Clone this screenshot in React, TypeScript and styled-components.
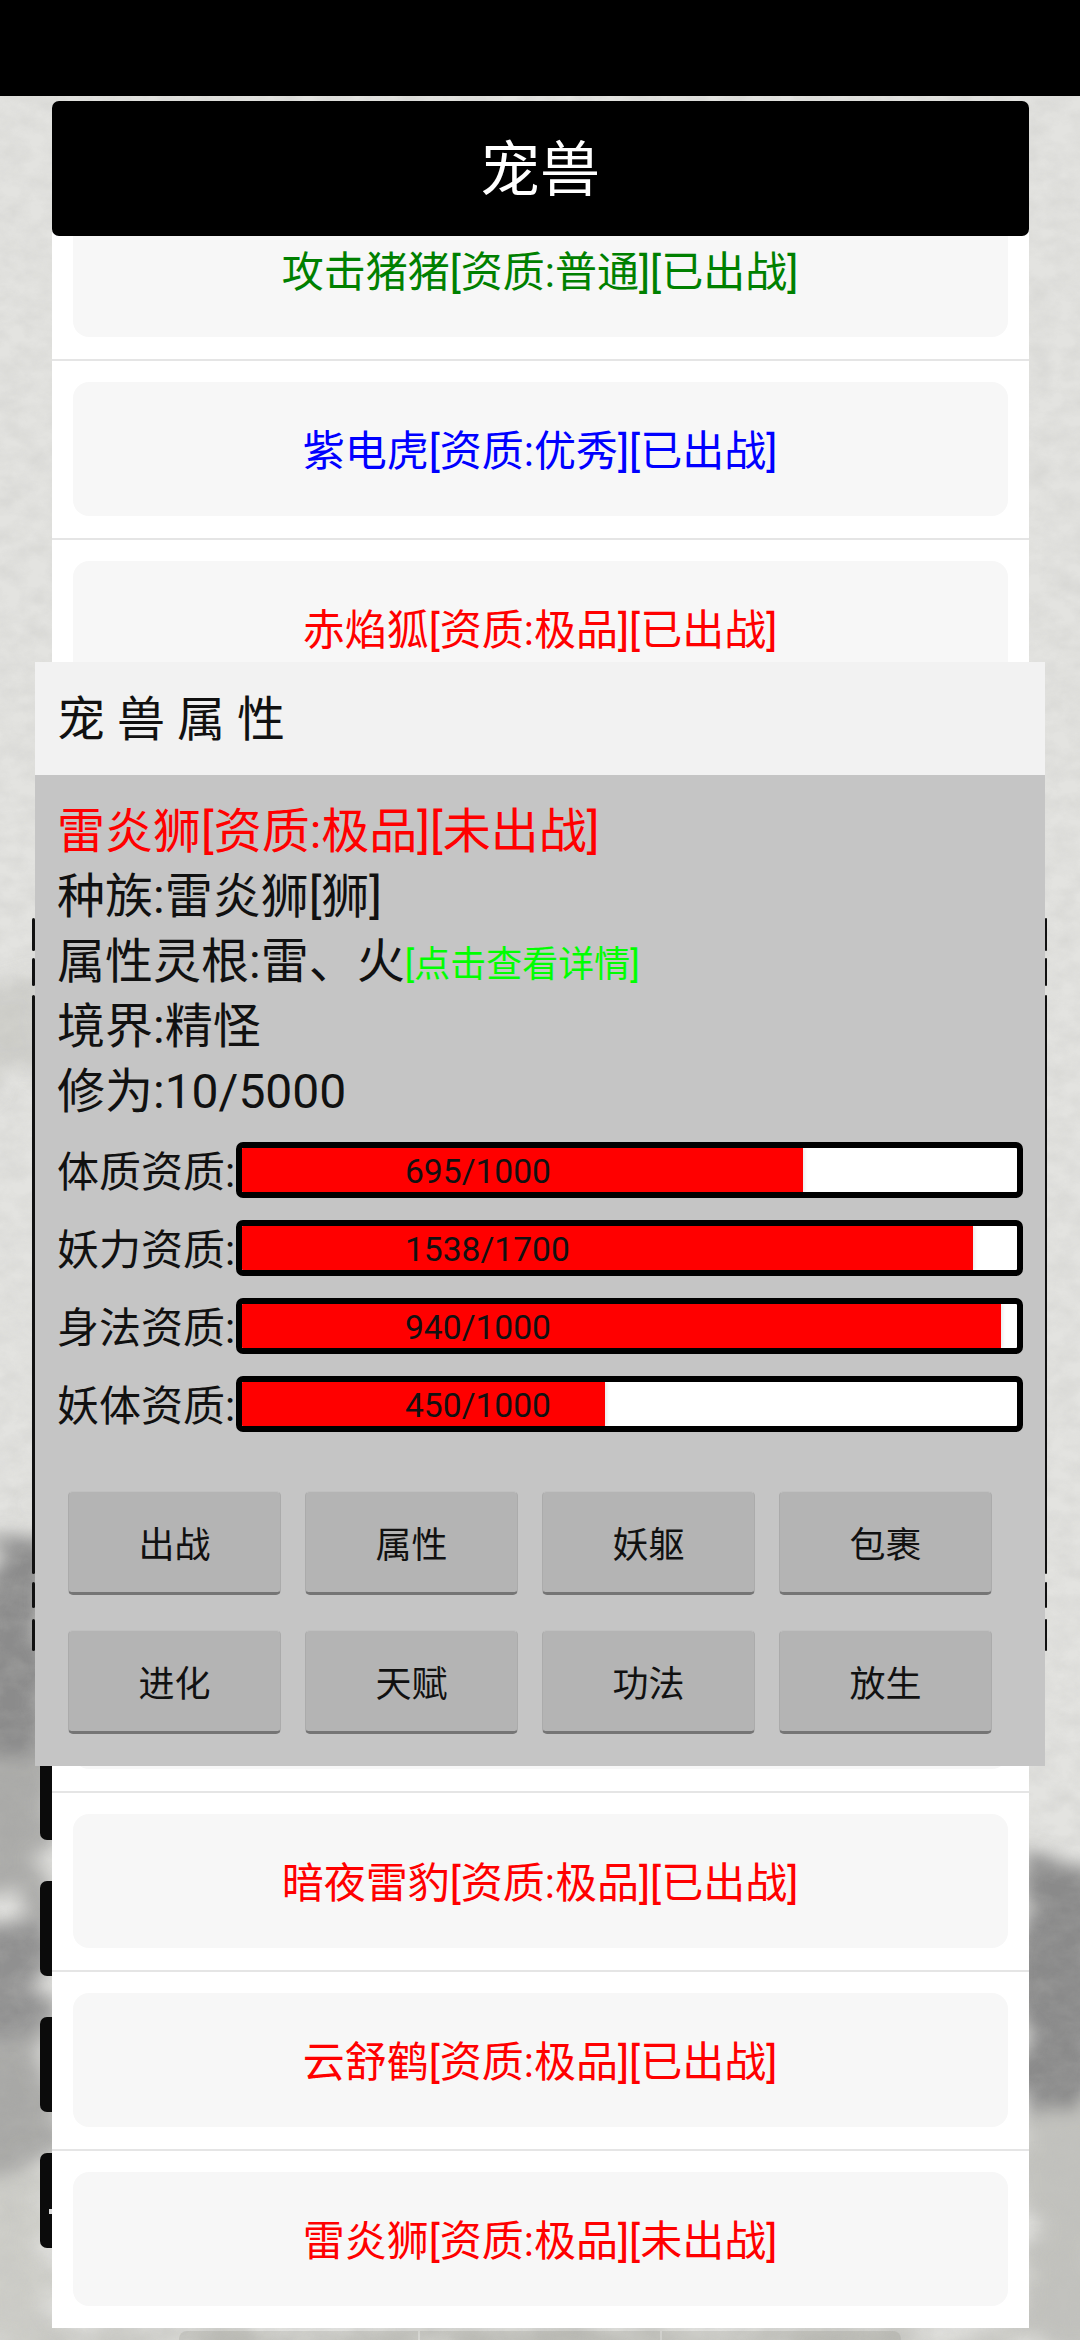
import React from 'react'
import styled, { createGlobalStyle } from 'styled-components'

const pets = [
  { name: '攻击猪猪[资质:普通][已出战]', color: '#008000' },
  { name: '紫电虎[资质:优秀][已出战]', color: '#0000ff' },
  { name: '赤焰狐[资质:极品][已出战]', color: '#ff0000' },
  { name: '', color: '#ff0000' },
  { name: '', color: '#ff0000' },
  { name: '', color: '#ff0000' },
  { name: '', color: '#ff0000' },
  { name: '', color: '#ff0000' },
  { name: '', color: '#ff0000' },
  { name: '暗夜雷豹[资质:极品][已出战]', color: '#ff0000' },
  { name: '云舒鹤[资质:极品][已出战]', color: '#ff0000' },
  { name: '雷炎狮[资质:极品][未出战]', color: '#ff0000' },
]

const stats = [
  { label: '体质资质:', value: 695, max: 1000 },
  { label: '妖力资质:', value: 1538, max: 1700 },
  { label: '身法资质:', value: 940, max: 1000 },
  { label: '妖体资质:', value: 450, max: 1000 },
]

const actions = ['出战', '属性', '妖躯', '包裹', '进化', '天赋', '功法', '放生']

// bits of the page underneath that stick out on both sides of the dialog
const edgeTicks = [
  { top: 822, height: 33 },
  { top: 862, height: 28 },
  { top: 899, height: 579 },
  { top: 1486, height: 26 },
  { top: 1523, height: 32 },
]

const Paper = () => (
  <PaperSvg viewBox="0 0 1080 2244" preserveAspectRatio="none">
    <defs>
      <filter id="mottle" x="0" y="0" width="100%" height="100%">
        <feTurbulence type="fractalNoise" baseFrequency="0.04 0.06" numOctaves="5" seed="7" />
        <feColorMatrix values="0 0 0 0 0.5  0 0 0 0 0.5  0 0 0 0 0.48  0.3 0.3 0 0 -0.22" />
      </filter>
      <filter id="ink" x="-30%" y="-30%" width="160%" height="160%">
        <feTurbulence type="fractalNoise" baseFrequency="0.015 0.035" numOctaves="5" seed="11" result="n" />
        <feDisplacementMap in="SourceGraphic" in2="n" scale="80" />
        <feGaussianBlur stdDeviation="9" />
      </filter>
    </defs>
    <rect width="1080" height="2244" fill="#e3e3e0" />
    <g filter="url(#ink)">
      <path d="M-30 905 L42 880 L42 960 L-30 1010 Z" fill="#cacac6" opacity="0.8" />
      <path d="M-30 1500 L45 1420 L50 1680 L-30 1700 Z" fill="#8b8b8b" />
      <path d="M-30 1690 L50 1640 L50 1810 L-30 1790 Z" fill="#aaaaa8" />
      <path d="M-30 1840 L55 1800 L55 1915 L-30 1960 Z" fill="#909090" />
      <path d="M-30 1960 L55 1925 L55 2060 L-30 2080 Z" fill="#a8a8a6" />
      <path d="M-30 2085 L55 2070 L55 2260 L-30 2260 Z" fill="#cdcdc8" />
      <path d="M1020 1745 L1110 1790 L1110 2010 L1020 2030 Z" fill="#8a8a8a" />
      <path d="M1020 2020 L1110 2010 L1110 2260 L1020 2260 Z" fill="#c2c2be" />
      <path d="M40 2232 L1040 2232 L1040 2260 L40 2260 Z" fill="#c8c8c3" />
    </g>
    <rect width="1080" height="2244" filter="url(#mottle)" />
  </PaperSvg>
)

const App = () => {
  return (
    <Screen>
      <GlobalStyle />
      <StatusBar />
      <Page>
        <Paper />
        <BackColumn>
          {[0, 1, 2, 3].map((i) => (
            <BackTab key={i}>{i === 3 && <BackDot />}</BackTab>
          ))}
        </BackColumn>
        {edgeTicks.map((t) => (
          <EdgeTick key={t.top} side="left" top={t.top} h={t.height} />
        ))}
        {edgeTicks.map((t) => (
          <EdgeTick key={t.top} side="right" top={t.top} h={t.height} />
        ))}

        <ListPanel>
          <TitleBar>宠兽</TitleBar>
          <PetList>
            {pets.map((p, i) => (
              <PetRow key={i}>
                <PetCard color={p.color}>{p.name}</PetCard>
              </PetRow>
            ))}
          </PetList>
        </ListPanel>

        <FootTabs>
          <FootTab />
          <FootTab />
          <FootTab />
        </FootTabs>

        <Dialog>
          <DialogTitle>宠兽属性</DialogTitle>
          <DialogBody>
            <InfoLine color="#ff0000">雷炎狮[资质:极品][未出战]</InfoLine>
            <InfoLine>种族:雷炎狮[狮]</InfoLine>
            <InfoLine>
              属性灵根:雷、火<DetailLink>[点击查看详情]</DetailLink>
            </InfoLine>
            <InfoLine>境界:精怪</InfoLine>
            <InfoLine>修为:10/5000</InfoLine>

            <StatList>
              {stats.map((s) => (
                <StatRow key={s.label}>
                  <StatLabel>{s.label}</StatLabel>
                  <StatBar>
                    <StatFill style={{ width: `${(s.value / s.max) * 104.2}%` }} />
                    <StatValue>
                      {s.value}/{s.max}
                    </StatValue>
                  </StatBar>
                </StatRow>
              ))}
            </StatList>

            <ActionGrid>
              {actions.map((a) => (
                <ActionButton key={a}>{a}</ActionButton>
              ))}
            </ActionGrid>
          </DialogBody>
        </Dialog>
      </Page>
    </Screen>
  )
}

export default App

const GlobalStyle = createGlobalStyle`
html, body {
  margin: 0;
  padding: 0;
  background: #000;
}
body {
  font-family: Roboto, "Noto Sans CJK SC", sans-serif;
  color: #111;
}
`

const Screen = styled.div`
  width: 1080px;
  height: 2340px;
  overflow: hidden;
  display: flex;
  flex-direction: column;
`

const StatusBar = styled.div`
  height: 96px;
  flex: none;
  background-color: #000;
`

const Page = styled.div`
  position: relative;
  flex: 1;
  display: flex;
  flex-direction: column;
  align-items: center;
  padding-top: 5px;
  overflow: hidden;
`

const PaperSvg = styled.svg`
  position: absolute;
  left: 0;
  top: 0;
  width: 1080px;
  height: 2244px;
`

const BackColumn = styled.div`
  position: absolute;
  left: 40px;
  top: 1649px;
  width: 24px;
  display: flex;
  flex-direction: column;
  gap: 41px;
`

const BackTab = styled.div`
  position: relative;
  height: 95px;
  background-color: #0b0b0b;
  border-radius: 7px 0 0 7px;
`

const BackDot = styled.span`
  position: absolute;
  left: 9px;
  top: 56px;
  width: 3px;
  height: 5px;
  background-color: #ddd;
`

const EdgeTick = styled.div<{ side: string; top: number; h: number }>`
  position: absolute;
  top: ${({ top }) => top}px;
  height: ${({ h }) => h}px;
  width: ${({ side }) => (side === 'left' ? 3 : 2)}px;
  ${({ side }) => (side === 'left' ? 'left: 32px;' : 'left: 1045px;')}
  background-color: #111;
  border-radius: 2px;
`

const ListPanel = styled.div`
  position: relative;
  width: 977px;
  flex: none;
`

const TitleBar = styled.div`
  position: relative;
  z-index: 1;
  height: 135px;
  padding-top: 4px;
  box-sizing: border-box;
  display: flex;
  align-items: center;
  justify-content: center;
  background-color: #000;
  color: #fff;
  border-radius: 7px;
  font-size: 60px;
  line-height: 70px;
`

const PetList = styled.div`
  margin-top: -54px;
  background-color: #fff;
`

const PetRow = styled.div`
  padding: 21px 21px 22px;
  border-bottom: 2px solid #e5e5e5;
  &:last-child {
    border-bottom: none;
  }
`

const PetCard = styled.div<{ color: string }>`
  height: 134px;
  box-sizing: border-box;
  padding-top: 5px;
  display: flex;
  align-items: center;
  justify-content: center;
  background-color: #f7f7f7;
  border-radius: 16px;
  color: ${({ color }) => color};
  font-size: 42px;
  line-height: 56px;
`

const FootTabs = styled.div`
  position: relative;
  width: 722px;
  height: 12px;
  margin-top: 3px;
  display: flex;
  flex: none;
  gap: 2px;
`

const FootTab = styled.div`
  flex: 1;
  background-color: rgba(120, 120, 110, 0.18);
  &:first-child {
    border-top-left-radius: 8px;
  }
  &:last-child {
    border-top-right-radius: 8px;
  }
`

const Dialog = styled.div`
  position: absolute;
  left: 35px;
  top: 566px;
  width: 1010px;
  z-index: 2;
`

const DialogTitle = styled.div`
  height: 113px;
  box-sizing: border-box;
  padding: 0 0 8px 22px;
  display: flex;
  align-items: center;
  background-color: #f2f2f2;
  color: #111;
  font-size: 48px;
  letter-spacing: 12px;
`

const DialogBody = styled.div`
  height: 991px;
  box-sizing: border-box;
  padding: 22px 22px 0;
  background-color: #c5c5c5;
`

const InfoLine = styled.div<{ color?: string }>`
  height: 65px;
  box-sizing: border-box;
  padding-top: 5px;
  display: flex;
  align-items: center;
  white-space: nowrap;
  font-size: 48px;
  line-height: 60px;
  color: ${({ color }) => color || '#111'};
`

const DetailLink = styled.span`
  color: #00ff00;
  font-size: 36px;
  margin-top: 6px;
`

const StatList = styled.div`
  margin-top: 20px;
  display: flex;
  flex-direction: column;
  gap: 22px;
`

const StatRow = styled.div`
  display: flex;
  align-items: center;
  height: 56px;
`

const StatLabel = styled.div`
  width: 179px;
  flex: none;
  padding-top: 5px;
  font-size: 42px;
  line-height: 56px;
  white-space: nowrap;
`

const StatBar = styled.div`
  position: relative;
  width: 788px;
  height: 56px;
  box-sizing: border-box;
  border: 6px solid #000;
  border-radius: 7px;
  background-color: #fff;
  overflow: hidden;
`

const StatFill = styled.div`
  height: 100%;
  background-color: #ff0000;
  box-shadow: 2px 0 3px rgba(0, 0, 0, 0.08);
`

const StatValue = styled.span`
  position: absolute;
  left: 163px;
  top: 3px;
  font-size: 33.6px;
  line-height: 42px;
  color: #111;
`

const ActionGrid = styled.div`
  margin: 59px 0 0 11px;
  display: grid;
  grid-template-columns: repeat(4, 213px);
  column-gap: 24px;
  row-gap: 35px;
`

const ActionButton = styled.div`
  height: 104px;
  box-sizing: border-box;
  display: flex;
  align-items: center;
  justify-content: center;
  background-color: #b4b4b4;
  border: 1px solid #ababab;
  border-top-color: #c0c0c0;
  border-bottom: 3px solid #757575;
  border-radius: 5px;
  font-size: 36px;
  color: #111;
`
